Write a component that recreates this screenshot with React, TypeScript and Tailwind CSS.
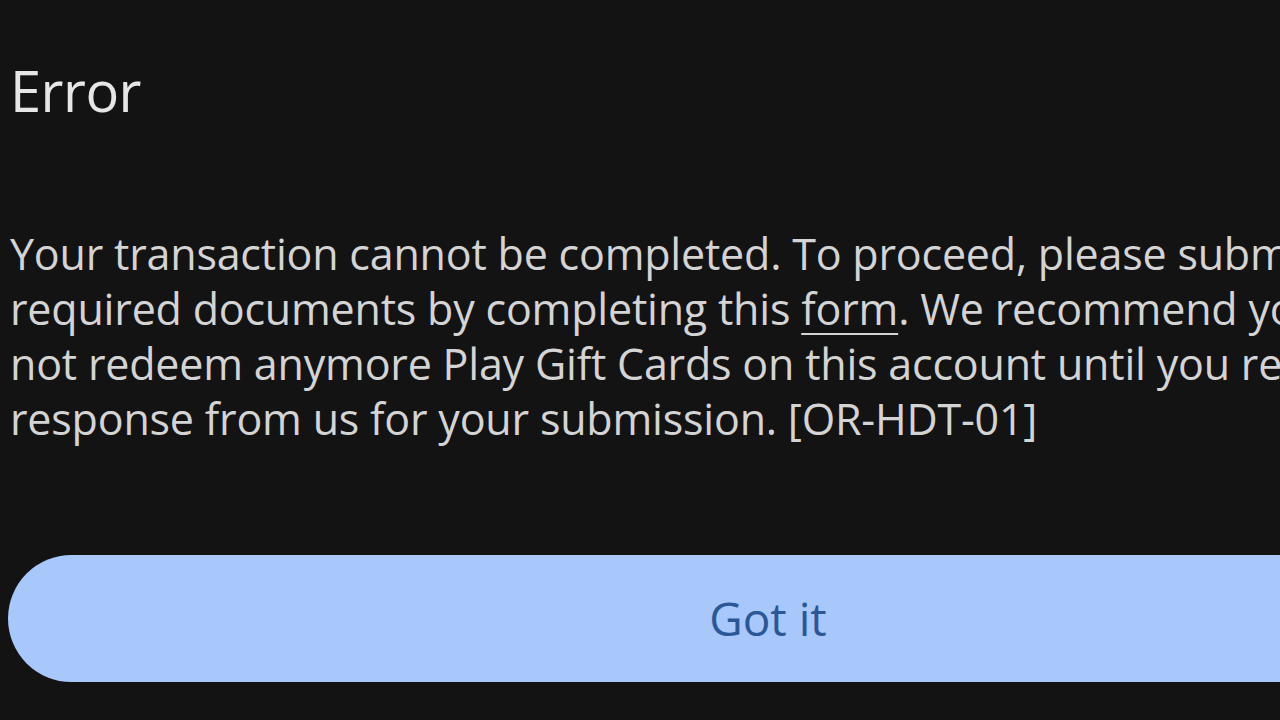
import React from "react";

export default function App() {
  return (
    <div
      className="w-[1280px] h-[720px] overflow-hidden bg-[#131313] relative"
      style={{ fontFamily: '"Open Sans", "Noto Sans", sans-serif' }}
    >
      <div className="w-[1600px] pl-[10px]">
        <div className="pt-[58px] text-[56px] leading-[64px] text-[#e6e6e6] tracking-[-0.5px]">Error</div>
        <div className="mt-[104px] text-[43px] leading-[55px] text-[#d4d4d4] whitespace-nowrap tracking-[-0.2px]">
          <div>Your transaction cannot be completed. To proceed, please submit the</div>
          <div>
            required documents by completing this{" "}
            <span className="underline underline-offset-[8px] decoration-2">form</span>. We recommend you do
          </div>
          <div>not redeem anymore Play Gift Cards on this account until you receive a</div>
          <div>response from us for your submission. [OR-HDT-01]</div>
        </div>
        <div className="mt-[109px] ml-[-2px] w-[1520px] h-[127px] rounded-full bg-[#a8c7fa] flex items-center justify-center">
          <span className="text-[46px] font-medium text-[#2a5798]">Got it</span>
        </div>
      </div>
    </div>
  );
}
